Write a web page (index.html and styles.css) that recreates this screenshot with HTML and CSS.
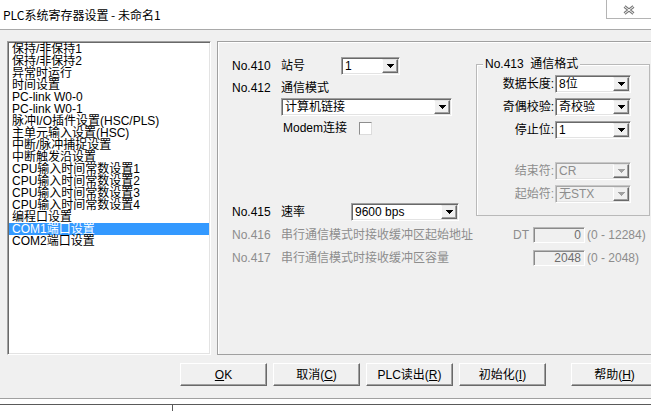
FILE: index.html
```html
<!DOCTYPE html>
<html lang="zh-CN">
<head>
    <meta charset="UTF-8">
    <title>PLC系统寄存器设置</title>
    <link rel="stylesheet" href="styles.css">
</head>
<body>
    <!-- TITLE BAR -->
    <div class="titlebar">
        <span class="title">PLC系统寄存器设置 - 未命名1</span>
        <div class="close-btn">
            <svg width="12" height="10" viewBox="0 0 12 10">
                <path d="M1.5 1.5l9 7M10.5 1.5l-9 7" stroke="#7a7a7a" stroke-width="3"/>
                <path d="M1.5 1.5l9 7M10.5 1.5l-9 7" stroke="#fff" stroke-width="1"/>
            </svg>
        </div>
    </div>

    <!-- DIALOG -->
    <div class="dialog">
        <div class="dialog-main">
            <ul class="listbox">
                <li>保持/非保持1</li>
                <li>保持/非保持2</li>
                <li>异常时运行</li>
                <li>时间设置</li>
                <li>PC-link W0-0</li>
                <li>PC-link W0-1</li>
                <li>脉冲I/O插件设置(HSC/PLS)</li>
                <li>主单元输入设置(HSC)</li>
                <li>中断/脉冲捕捉设置</li>
                <li>中断触发沿设置</li>
                <li>CPU输入时间常数设置1</li>
                <li>CPU输入时间常数设置2</li>
                <li>CPU输入时间常数设置3</li>
                <li>CPU输入时间常数设置4</li>
                <li>编程口设置</li>
                <li class="selected">COM1端口设置</li>
                <li>COM2端口设置</li>
            </ul>

            <div class="panel">
                <div class="panel-top">
                    <div class="left-col">
                        <div class="row row-station">
                            <span class="no">No.410</span>
                            <span class="lbl lbl-station">站号</span>
                            <div class="combo combo-station">
                                <span class="combo-text">1</span>
                                <span class="combo-btn"><svg width="7" height="4" viewBox="0 0 7 4"><path d="M0 0h7L3.5 4z"/></svg></span>
                            </div>
                        </div>
                        <div class="row row-mode">
                            <span class="no">No.412</span>
                            <span class="lbl">通信模式</span>
                        </div>
                        <div class="combo combo-mode">
                            <span class="combo-text">计算机链接</span>
                            <span class="combo-btn"><svg width="7" height="4" viewBox="0 0 7 4"><path d="M0 0h7L3.5 4z"/></svg></span>
                        </div>
                        <div class="row row-modem">
                            <span class="lbl lbl-modem">Modem连接</span>
                            <span class="checkbox"></span>
                        </div>
                        <div class="row row-baud">
                            <span class="no">No.415</span>
                            <span class="lbl lbl-baud">速率</span>
                            <div class="combo combo-baud">
                                <span class="combo-text">9600 bps</span>
                                <span class="combo-btn"><svg width="7" height="4" viewBox="0 0 7 4"><path d="M0 0h7L3.5 4z"/></svg></span>
                            </div>
                        </div>
                    </div>

                    <div class="groupbox">
                        <span class="legend">No.413&nbsp; 通信格式</span>
                        <div class="fmt-row">
                            <span class="fmt-lbl">数据长度:</span>
                            <div class="combo combo-fmt">
                                <span class="combo-text">8位</span>
                                <span class="combo-btn"><svg width="7" height="4" viewBox="0 0 7 4"><path d="M0 0h7L3.5 4z"/></svg></span>
                            </div>
                        </div>
                        <div class="fmt-row">
                            <span class="fmt-lbl">奇偶校验:</span>
                            <div class="combo combo-fmt">
                                <span class="combo-text">奇校验</span>
                                <span class="combo-btn"><svg width="7" height="4" viewBox="0 0 7 4"><path d="M0 0h7L3.5 4z"/></svg></span>
                            </div>
                        </div>
                        <div class="fmt-row">
                            <span class="fmt-lbl">停止位:</span>
                            <div class="combo combo-fmt">
                                <span class="combo-text">1</span>
                                <span class="combo-btn"><svg width="7" height="4" viewBox="0 0 7 4"><path d="M0 0h7L3.5 4z"/></svg></span>
                            </div>
                        </div>
                        <div class="fmt-row fmt-gap disabled">
                            <span class="fmt-lbl">结束符:</span>
                            <div class="combo combo-fmt">
                                <span class="combo-text">CR</span>
                                <span class="combo-btn"><svg width="7" height="4" viewBox="0 0 7 4"><path d="M0 0h7L3.5 4z"/></svg></span>
                            </div>
                        </div>
                        <div class="fmt-row disabled">
                            <span class="fmt-lbl">起始符:</span>
                            <div class="combo combo-fmt">
                                <span class="combo-text">无STX</span>
                                <span class="combo-btn"><svg width="7" height="4" viewBox="0 0 7 4"><path d="M0 0h7L3.5 4z"/></svg></span>
                            </div>
                        </div>
                    </div>
                </div>

                <div class="row row-buf disabled">
                    <span class="no">No.416</span>
                    <span class="desc">串行通信模式时接收缓冲区起始地址</span>
                    <span class="dt">DT</span>
                    <span class="num-input">0</span>
                    <span class="range">(0 - 12284)</span>
                </div>
                <div class="row row-buf row-size disabled">
                    <span class="no">No.417</span>
                    <span class="desc">串行通信模式时接收缓冲区容量</span>
                    <span class="dt"></span>
                    <span class="num-input">2048</span>
                    <span class="range">(0 - 2048)</span>
                </div>
            </div>
        </div>

        <!-- BUTTONS -->
        <div class="button-row">
            <button class="btn"><u>O</u>K</button>
            <button class="btn">取消(<u>C</u>)</button>
            <button class="btn">PLC读出(<u>R</u>)</button>
            <button class="btn">初始化(<u>I</u>)</button>
            <button class="btn btn-help">帮助(<u>H</u>)</button>
        </div>
    </div>

    <!-- WINDOW BEHIND -->
    <div class="below">
        <div class="below-line"><div class="below-tick"></div></div>
    </div>
</body>
</html>
```

FILE: styles.css
```css
:root {
    --face: #f0f0f0;
    --shadow: #a0a0a0;
    --dark-shadow: #696969;
    --disabled: #8d8d8d;
}

body {
    margin: 0;
    width: 651px;
    height: 411px;
    overflow: hidden;
    background: #fff;
    font-family: "Liberation Sans", "Noto Sans CJK SC", sans-serif;
    font-size: 12px;
    line-height: 14px;
    color: #000;
}

/* TITLE BAR */
.titlebar {
    height: 29px;
    display: flex;
    align-items: flex-start;
    border-bottom: 1px solid #a9a9a9;
    background: #fff;
}

.title {
    margin: 8px 0 0 3px;
    font-family: "Noto Sans CJK SC", sans-serif;
    font-size: 12px;
    line-height: 14px;
}

.close-btn {
    margin-left: auto;
    width: 45px;
    height: 19px;
    box-sizing: border-box;
    padding-top: 2px;
    border-left: 1px solid #b4b4b4;
    border-bottom: 1px solid #b4b4b4;
    display: flex;
    align-items: center;
    justify-content: center;
}

/* DIALOG */
.dialog {
    height: 369px;
    box-sizing: border-box;
    background: var(--face);
    border-bottom: 1px solid #a0a0a0;
    padding: 11px 0 0 7px;
}

.dialog-main {
    display: flex;
    gap: 6px;
    height: 314px;
}

/* LIST BOX */
.listbox {
    list-style: none;
    margin: 0;
    padding: 1px 0 0 0;
    width: 204px;
    flex-shrink: 0;
    box-sizing: border-box;
    background: #fff;
    border: 1px solid;
    border-color: var(--shadow) #fff #fff var(--shadow);
    box-shadow: inset 1px 1px var(--dark-shadow), inset -1px -1px #e3e3e3;
}

.listbox li {
    height: 12px;
    line-height: 12px;
    padding-left: 3px;
    margin: 0 1px;
    white-space: nowrap;
}

.listbox li.selected {
    background: #3399ff;
    color: #fff;
}

/* RIGHT PANEL */
.panel {
    width: 450px;
    flex-shrink: 0;
    box-sizing: border-box;
    border: 1px solid var(--shadow);
    box-shadow: inset 1px 1px #fff;
    padding: 15px 0 0 14px;
}

.panel-top {
    display: flex;
    align-items: flex-start;
}

.left-col {
    width: 244px;
    flex-shrink: 0;
}

.row {
    display: flex;
    align-items: center;
    white-space: nowrap;
}

.no {
    width: 49px;
    flex-shrink: 0;
}

.lbl-station { width: 60px; }
.lbl-baud { width: 70px; }

.row-station { height: 18px; }
.row-mode { height: 14px; margin-top: 6px; }
.row-modem { height: 14px; margin: 5px 0 0 51px; }
.row-baud { height: 18px; margin-top: 68px; }

.lbl-modem { width: 76px; }

.checkbox {
    width: 13px;
    height: 13px;
    box-sizing: border-box;
    background: #fff;
    border: 1px solid;
    border-color: #8e8e8e #dcdcdc #dcdcdc #8e8e8e;
}

/* COMBO BOX */
.combo {
    height: 18px;
    flex-shrink: 0;
    box-sizing: border-box;
    display: flex;
    background: #fff;
    border: 1px solid;
    border-color: var(--shadow) #fff #fff var(--shadow);
    box-shadow: inset 1px 1px var(--dark-shadow), inset -1px -1px #e3e3e3;
    padding: 1px;
}

.combo-text {
    flex: 1;
    padding-left: 2px;
    line-height: 14px;
    overflow: hidden;
    white-space: nowrap;
}

.combo-btn {
    width: 16px;
    height: 14px;
    box-sizing: border-box;
    background: var(--face);
    border: 1px solid;
    border-color: #e3e3e3 var(--dark-shadow) var(--dark-shadow) #fff;
    box-shadow: inset -1px -1px var(--shadow);
    display: flex;
    align-items: center;
    justify-content: center;
}

.combo-btn svg {
    shape-rendering: crispEdges;
    fill: #000;
}

.combo-station { width: 59px; }
.combo-mode { width: 171px; margin: 3px 0 0 49px; }
.combo-baud { width: 108px; }
.combo-fmt { width: 76px; }

/* GROUP BOX */
.groupbox {
    position: relative;
    width: 174px;
    height: 152px;
    flex-shrink: 0;
    margin-top: 7px;
    box-sizing: border-box;
    border: 1px solid #b9b9b9;
    box-shadow: inset 1px 1px #fff;
    padding-top: 10px;
}

.legend {
    position: absolute;
    top: -7px;
    left: 6px;
    padding: 0 2px;
    line-height: 13px;
    background: var(--face);
    white-space: nowrap;
}

.fmt-row {
    display: flex;
    align-items: center;
    height: 18px;
    margin-bottom: 5px;
}

.fmt-gap { margin-top: 23px; }

.fmt-lbl {
    width: 77px;
    margin-right: 1px;
    text-align: right;
    white-space: nowrap;
}

.disabled { color: var(--disabled); }

.disabled .combo {
    background: var(--face);
    border-color: #c8c8c8 #fff #fff #c8c8c8;
    box-shadow: inset 1px 1px #a8a8a8, inset -1px -1px #e3e3e3;
}

.disabled .combo-btn svg { fill: #a0a0a0; }

/* BUFFER ROWS */
.row-buf {
    height: 16px;
    margin-top: 6px;
}

.row-size { margin-top: 7px; }

.desc { width: 232px; flex-shrink: 0; }
.dt { width: 20px; flex-shrink: 0; }

.num-input {
    width: 52px;
    height: 16px;
    flex-shrink: 0;
    box-sizing: border-box;
    background: var(--face);
    border: 1px solid;
    border-color: #b8b8b8 #fff #fff #b8b8b8;
    box-shadow: inset 1px 1px #8a8a8a;
    text-align: right;
    padding-right: 3px;
    line-height: 14px;
    color: #6d6d6d;
}

.range { margin-left: 2px; }

/* BUTTONS */
.button-row {
    display: flex;
    gap: 6px;
    margin: 8px 0 0 173px;
}

.btn {
    width: 87px;
    height: 23px;
    flex-shrink: 0;
    padding: 0;
    font: inherit;
    color: #000;
    background: var(--face);
    border: 1px solid;
    border-color: #fff var(--dark-shadow) var(--dark-shadow) #fff;
    box-shadow: inset -1px -1px var(--shadow);
    white-space: nowrap;
}

.btn-help { margin-left: 19px; }

/* WINDOW BEHIND */
.below {
    padding-top: 5px;
}

.below-line {
    border-top: 1px solid #5a5a5a;
    height: 7px;
}

.below-tick {
    width: 1px;
    height: 7px;
    margin-left: 172px;
    background: #5a5a5a;
}
```
